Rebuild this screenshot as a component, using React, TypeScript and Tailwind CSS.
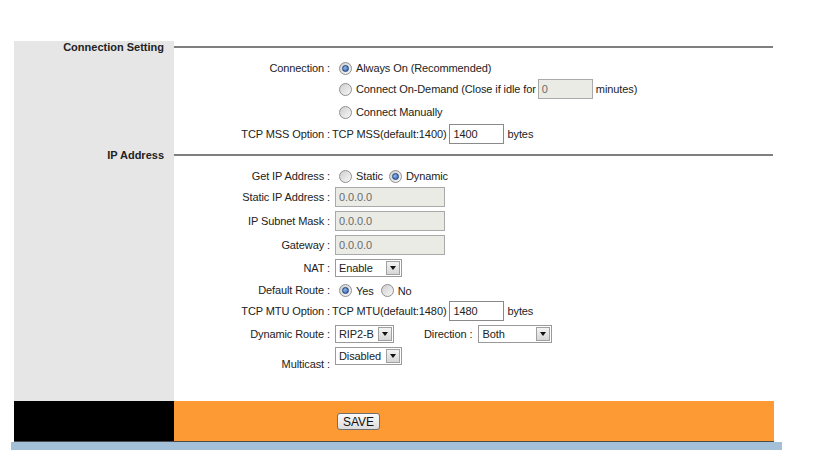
import type { ReactNode } from "react";

const FONT = "font-['Liberation_Sans',Arial,sans-serif]";

function Radio({ checked = false }: { checked?: boolean }) {
  return (
    <span className="ml-[4px] flex h-[13px] w-[13px] flex-shrink-0 items-center justify-center rounded-full border border-[#8f8f8f] bg-[linear-gradient(135deg,#cfcfcf,#f7f7f7)]">
      {checked && <span className="h-[7px] w-[7px] rounded-full border border-[#1d3f7a] bg-[radial-gradient(circle_at_35%_35%,#8fb8ea,#2a5fae)]" />}
    </span>
  );
}

function TextBox({ value, w, disabled = false }: { value: string; w: string; disabled?: boolean }) {
  return (
    <span
      className={`flex h-[20px] items-center border px-[3px] text-[11px] ${w} ${
        disabled ? "border-[#a9a9a9] bg-[#ebebe6] text-[#6a6a6a]" : "border-[#8a8a8a] bg-white text-[#222]"
      }`}
    >
      {value}
    </span>
  );
}

function Select({ value, w }: { value: string; w: string }) {
  return (
    <span className={`flex h-[18px] items-center justify-between border border-[#9a9a9a] bg-white pl-[3px] pr-[1px] ${w}`}>
      <span>{value}</span>
      <span className="flex h-[14px] w-[14px] items-center justify-center border border-[#a0a0a0] bg-[linear-gradient(#f4f4f4,#d6d6d6)]">
        <span className="h-0 w-0 border-x-[3.5px] border-t-[4px] border-x-transparent border-t-[#111]" />
      </span>
    </span>
  );
}

function Row({
  label,
  pt = "",
  h = "h-[20px]",
  align = "items-center",
  children,
}: {
  label?: string;
  pt?: string;
  h?: string;
  align?: string;
  children?: ReactNode;
}) {
  return (
    <div className="flex">
      <div className="w-[160px] flex-shrink-0 bg-[#e6e6e6]" />
      <div className={`flex w-[600px] ${pt}`}>
        <div className={`flex ${h} w-full ${align}`}>
          <span className="w-[157px] flex-shrink-0 pr-[1px] text-right">{label ? `${label} :` : ""}</span>
          <span className="flex items-center pl-[4px]">{children}</span>
        </div>
      </div>
    </div>
  );
}

function Section({ title, pt = "" }: { title: string; pt?: string }) {
  return (
    <div className="flex">
      <div className={`w-[160px] flex-shrink-0 bg-[#e6e6e6] pr-[10px] text-right font-bold tracking-normal ${pt}`}>
        <div className="flex h-[12px] items-center justify-end">{title}</div>
      </div>
      <div className={`flex w-[600px] ${pt}`}>
        <div className="flex h-[12px] w-full items-center">
          <div className="h-[2px] w-[599px] bg-[#7f7f7f]" />
        </div>
      </div>
    </div>
  );
}

export default function App() {
  return (
    <div className={`h-[460px] w-[819px] bg-white text-[11px] leading-none tracking-[-0.1px] text-[#222] ${FONT}`}>
      <div className="pl-[14px] pt-[41px]">
        <Section title="Connection Setting" />
        <Row label="Connection" pt="pt-[5px]">
          <Radio checked />
          <span className="ml-[4px]">Always On (Recommended)</span>
        </Row>
        <Row pt="pt-[1px]">
          <Radio />
          <span className="ml-[4px]">Connect On-Demand (Close if idle for</span>
          <span className="ml-[2px]">
            <TextBox value="0" w="w-[55px]" disabled />
          </span>
          <span className="ml-[3px]">minutes)</span>
        </Row>
        <Row pt="pt-[3px]">
          <Radio />
          <span className="ml-[4px]">Connect Manually</span>
        </Row>
        <Row label="TCP MSS Option" pt="pt-[2px]">
          <span className="-ml-[3px]">TCP MSS(default:1400)</span>
          <span className="ml-[3px]">
            <TextBox value="1400" w="w-[55px]" />
          </span>
          <span className="ml-[3px]">bytes</span>
        </Row>
        <Section title="IP Address" pt="pt-[5px]" />
        <Row label="Get IP Address" pt="pt-[5px]">
          <Radio />
          <span className="ml-[4px]">Static</span>
          <span className="ml-[2px] flex items-center">
            <Radio checked />
          </span>
          <span className="ml-[4px]">Dynamic</span>
        </Row>
        <Row label="Static IP Address" pt="pt-[1px]">
          <TextBox value="0.0.0.0" w="w-[110px]" disabled />
        </Row>
        <Row label="IP Subnet Mask" pt="pt-[4px]">
          <TextBox value="0.0.0.0" w="w-[110px]" disabled />
        </Row>
        <Row label="Gateway" pt="pt-[4px]">
          <TextBox value="0.0.0.0" w="w-[110px]" disabled />
        </Row>
        <Row label="NAT" pt="pt-[3px]">
          <Select value="Enable" w="w-[67px]" />
        </Row>
        <Row label="Default Route" pt="pt-[2px]">
          <Radio checked />
          <span className="ml-[4px] mt-[2px]">Yes</span>
          <span className="ml-[3px] flex items-center">
            <Radio />
          </span>
          <span className="ml-[4px] mt-[2px]">No</span>
        </Row>
        <Row label="TCP MTU Option" pt="pt-[1px]">
          <span className="-ml-[3px]">TCP MTU(default:1480)</span>
          <span className="ml-[3px]">
            <TextBox value="1480" w="w-[55px]" />
          </span>
          <span className="ml-[3px]">bytes</span>
        </Row>
        <Row label="Dynamic Route" pt="pt-[3px]">
          <Select value="RIP2-B" w="w-[59px]" />
          <span className="ml-[30px]">Direction :</span>
          <span className="ml-[6px]">
            <Select value="Both" w="w-[74px]" />
          </span>
        </Row>
        <Row label="Multicast" pt="pt-[2px]" h="h-[24px]" align="items-end">
          <span className="mb-[5px]">
            <Select value="Disabled" w="w-[67px]" />
          </span>
        </Row>
        <div className="flex">
          <div className="h-[31px] w-[160px] bg-[#e6e6e6]" />
        </div>
        <div className="flex h-[41px] w-[760px] border-b border-[#4a4a4a]">
          <div className="w-[160px] bg-black" />
          <div className="flex flex-1 items-center bg-[#fd9a33] pl-[163px]">
            <button className="mt-[1px] flex h-[17px] w-[43px] items-center justify-center rounded-[3px] border border-[#707070] bg-[linear-gradient(#fbfbfb,#dcdcdc)] text-[12px] tracking-normal text-[#111]">
              SAVE
            </button>
          </div>
        </div>
      </div>
      <div className="ml-[11px] h-[8px] w-[771px] bg-[#a4c0d9]" />
    </div>
  );
}
